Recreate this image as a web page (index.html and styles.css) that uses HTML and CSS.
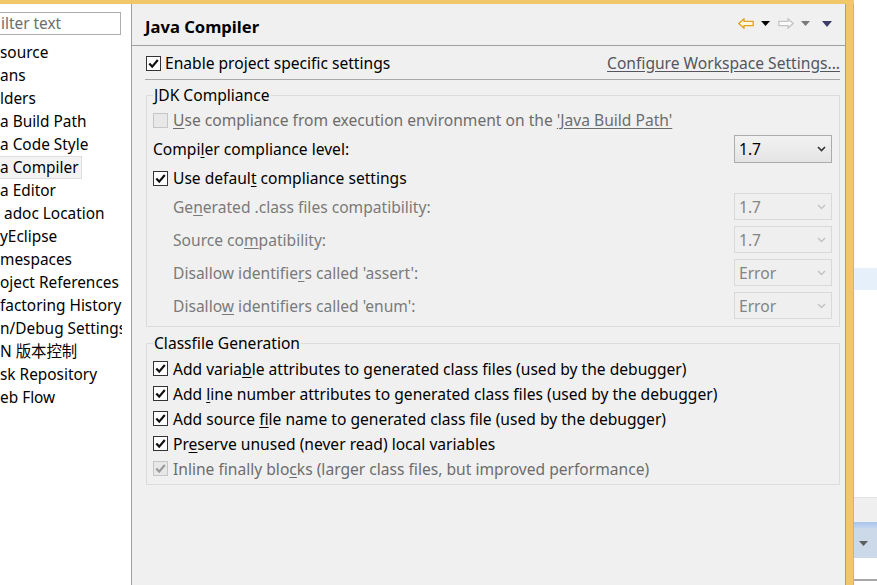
FILE: index.html
```html
<!DOCTYPE html>
<html>
<head>
<meta charset="utf-8">
<title>Properties - Java Compiler</title>
<link rel="stylesheet" href="styles.css">
</head>
<body>
<div class="screen">
  <div class="window">
    <div class="win-top"></div>
    <div class="win-body">
      <aside class="sidebar">
        <div class="filter">ilter text</div>
        <ul class="tree">
          <li>source</li>
          <li>ans</li>
          <li>lders</li>
          <li>a Build Path</li>
          <li>a Code Style</li>
          <li class="selected"><span>a Compiler</span></li>
          <li>a Editor</li>
          <li class="ind4">adoc Location</li>
          <li>yEclipse</li>
          <li>mespaces</li>
          <li>oject References</li>
          <li>factoring History</li>
          <li>n/Debug Settings</li>
          <li>N 版本控制</li>
          <li>sk Repository</li>
          <li>eb Flow</li>
        </ul>
      </aside>

      <main class="panel">
        <header class="panel-head">
          <h1 class="title">Java Compiler</h1>
          <div class="nav">
            <svg class="nav-arrow" width="16" height="11" viewBox="0 0 16 11"><polygon points="0.8,5.5 6,0.8 6,3.3 15.2,3.3 15.2,7.7 6,7.7 6,10.2" fill="#fff8e0" stroke="#e3a21a" stroke-width="1.3" stroke-linejoin="miter"/></svg>
            <svg class="nav-tri" width="9" height="5" viewBox="0 0 9 5"><polygon points="0,0 9,0 4.5,5" fill="#000"/></svg>
            <svg class="nav-arrow" width="16" height="11" viewBox="0 0 16 11"><polygon points="15.2,5.5 10,0.8 10,3.3 0.8,3.3 0.8,7.7 10,7.7 10,10.2" fill="#fafafa" stroke="#c4c4c4" stroke-width="1.3"/></svg>
            <svg class="nav-tri" width="9" height="5" viewBox="0 0 9 5"><polygon points="0,0 9,0 4.5,5" fill="#7a7a7a"/></svg>
            <svg class="nav-tri menu" width="10" height="6" viewBox="0 0 10 6"><polygon points="0,0 10,0 5,6" fill="#3c3c64"/></svg>
          </div>
        </header>

        <div class="panel-body">
          <div class="top-row">
            <label class="cb first">
              <span class="box"><svg width="13" height="13" viewBox="0 0 13 13"><path d="M2.3 6.6 L5.2 9.6 L10.8 3" fill="none" stroke="#111" stroke-width="2.2"/></svg></span>
              <span>Enable pro<u>j</u>ect specific settings</span>
            </label>
            <a class="link" href="#">Configure Workspace Settings...</a>
          </div>
          <div class="sep"></div>

          <fieldset class="group jdk">
            <legend>JDK Compliance</legend>
            <div class="row r24">
              <label class="cb disabled">
                <span class="box"></span>
                <span><u>U</u>se compliance from execution environment on the <a class="link dim" href="#">'Java Build Path'</a></span>
              </label>
            </div>
            <div class="row r28 gap3">
              <span class="lbl">Compi<u>l</u>er compliance level:</span>
              <div class="combo"><span>1.7</span><svg width="9" height="6" viewBox="0 0 9 6"><path d="M1 1 L4.5 4.5 L8 1" fill="none" stroke="#333" stroke-width="1.6"/></svg></div>
            </div>
            <div class="row r24 gap3">
              <label class="cb">
                <span class="box"><svg width="13" height="13" viewBox="0 0 13 13"><path d="M2.3 6.6 L5.2 9.6 L10.8 3" fill="none" stroke="#111" stroke-width="2.2"/></svg></span>
                <span>Use defaul<u>t</u> compliance settings</span>
              </label>
            </div>
            <div class="row r27 gap3">
              <span class="lbl sub">Ge<u>n</u>erated .class files compatibility:</span>
              <div class="combo off"><span>1.7</span><svg width="9" height="6" viewBox="0 0 9 6"><path d="M1 1 L4.5 4.5 L8 1" fill="none" stroke="#c2c2c2" stroke-width="1.4"/></svg></div>
            </div>
            <div class="row r27 gap6">
              <span class="lbl sub">Source co<u>m</u>patibility:</span>
              <div class="combo off"><span>1.7</span><svg width="9" height="6" viewBox="0 0 9 6"><path d="M1 1 L4.5 4.5 L8 1" fill="none" stroke="#c2c2c2" stroke-width="1.4"/></svg></div>
            </div>
            <div class="row r27 gap6">
              <span class="lbl sub">Disallow identifie<u>r</u>s called 'assert':</span>
              <div class="combo off"><span>Error</span><svg width="9" height="6" viewBox="0 0 9 6"><path d="M1 1 L4.5 4.5 L8 1" fill="none" stroke="#c2c2c2" stroke-width="1.4"/></svg></div>
            </div>
            <div class="row r27 gap6">
              <span class="lbl sub">Disallo<u>w</u> identifiers called 'enum':</span>
              <div class="combo off"><span>Error</span><svg width="9" height="6" viewBox="0 0 9 6"><path d="M1 1 L4.5 4.5 L8 1" fill="none" stroke="#c2c2c2" stroke-width="1.4"/></svg></div>
            </div>
          </fieldset>

          <fieldset class="group classfile">
            <legend>Classfile Generation</legend>
            <div class="row r25">
              <label class="cb"><span class="box"><svg width="13" height="13" viewBox="0 0 13 13"><path d="M2.3 6.6 L5.2 9.6 L10.8 3" fill="none" stroke="#111" stroke-width="2.2"/></svg></span><span>Add varia<u>b</u>le attributes to generated class files (used by the debugger)</span></label>
            </div>
            <div class="row r25">
              <label class="cb"><span class="box"><svg width="13" height="13" viewBox="0 0 13 13"><path d="M2.3 6.6 L5.2 9.6 L10.8 3" fill="none" stroke="#111" stroke-width="2.2"/></svg></span><span>Add <u>l</u>ine number attributes to generated class files (used by the debugger)</span></label>
            </div>
            <div class="row r25">
              <label class="cb"><span class="box"><svg width="13" height="13" viewBox="0 0 13 13"><path d="M2.3 6.6 L5.2 9.6 L10.8 3" fill="none" stroke="#111" stroke-width="2.2"/></svg></span><span>Add source <u>f</u>ile name to generated class file (used by the debugger)</span></label>
            </div>
            <div class="row r25">
              <label class="cb"><span class="box"><svg width="13" height="13" viewBox="0 0 13 13"><path d="M2.3 6.6 L5.2 9.6 L10.8 3" fill="none" stroke="#111" stroke-width="2.2"/></svg></span><span>Pr<u>e</u>serve unused (never read) local variables</span></label>
            </div>
            <div class="row r25">
              <label class="cb disabled"><span class="box"><svg width="13" height="13" viewBox="0 0 13 13"><path d="M2.3 6.6 L5.2 9.6 L10.8 3" fill="none" stroke="#9a9a9a" stroke-width="2.2"/></svg></span><span>Inline finally blo<u>c</u>ks (larger class files, but improved performance)</span></label>
            </div>
          </fieldset>
        </div>
      </main>

      <div class="win-edge"></div>
    </div>
  </div>

  <div class="behind">
    <div class="hl"></div>
    <div class="dock">
      <div class="dock-top"></div>
      <div class="dock-bar"></div>
      <div class="dock-row"><svg width="9" height="5" viewBox="0 0 9 5"><polygon points="0,0 9,0 4.5,5" fill="#5e5e5e"/></svg></div>
      <div class="dock-line"></div>
    </div>
  </div>
</div>
</body>
</html>
```

FILE: styles.css
```css
* { box-sizing: border-box; }
html, body { margin: 0; padding: 0; }
body {
  width: 877px;
  height: 585px;
  overflow: hidden;
  background: #fff;
  font-family: "Noto Sans", "Noto Sans CJK SC", sans-serif;
  font-size: 15.6px;
  color: #000;
}
u { text-decoration: underline; text-underline-offset: 2px; }

.screen { display: flex; height: 585px; }

.window { width: 854px; flex: none; display: flex; flex-direction: column; }
.win-top { height: 4px; background: #f0c86a; flex: none; }
.win-body { flex: 1; display: flex; min-height: 0; }
.win-edge {
  width: 8px;
  flex: none;
  background: #f0c86a;
  border-right: 1px solid #d9b25c;
}

/* sidebar */
.sidebar {
  width: 132px;
  flex: none;
  background: #fff;
  border-right: 1px solid #a0a0a0;
  overflow: hidden;
  font-size: 15.4px;
}
.filter {
  margin: 8px 0 0 -10px;
  width: 131px;
  height: 23px;
  border: 1px solid #adadad;
  padding-left: 10px;
  line-height: 21px;
  color: #6d6d6d;
  white-space: nowrap;
}
.tree {
  list-style: none;
  margin: 6px 0 0 0;
  padding: 0;
  width: 122px;
  overflow: hidden;
}
.tree li {
  height: 23px;
  line-height: 23px;
  white-space: nowrap;
}
.tree li.ind4 { padding-left: 4px; }
.tree li.selected span {
  display: inline-block;
  height: 23px;
  line-height: 21px;
  padding-right: 2px;
  background: #f3f3f3;
  border: 1px solid #dedede;
  border-left: none;
}

/* panel */
.panel {
  width: 714px;
  flex: none;
  background: #f0f0f0;
  border-right: 1px solid #a0a0a0;
  display: flex;
  flex-direction: column;
}
.panel-head {
  height: 42px;
  flex: none;
  border-bottom: 1px solid #a0a0a0;
  display: flex;
  align-items: flex-start;
  padding: 0 0 0 13px;
}
.title {
  margin: 12px 0 0 0;
  font-size: 16.6px;
  font-weight: bold;
  line-height: 22px;
}
.nav {
  margin-left: auto;
  margin-top: 14px;
  display: flex;
  align-items: center;
  height: 11px;
  padding-right: 13px;
}
.nav svg { display: block; }
.nav-arrow { margin-left: 8px; }
.nav-arrow:first-child { margin-left: 0; }
.nav-tri { margin-left: 7px; }
.nav-tri.menu { margin-left: 12px; }

.panel-body {
  padding: 0 5px 0 14px;
}
.top-row {
  margin-top: 5px;
  height: 24px;
  display: flex;
  align-items: center;
  justify-content: space-between;
}
.link {
  color: #55555f;
  text-decoration: underline;
  text-underline-offset: 2px;
}
.link.dim { color: #6d6d6d; }
.sep {
  margin: 4px 0 0 -1px;
  height: 1px;
  background: #a8a8a8;
}

/* checkbox */
.cb { display: flex; align-items: center; white-space: nowrap; }
.box {
  width: 15px;
  height: 15px;
  flex: none;
  border: 1px solid #333;
  background: #fff;
  margin-right: 5px;
  display: flex;
  align-items: center;
  justify-content: center;
}
.box svg { display: block; }
.cb.first .box { margin-right: 4px; }
.cb.disabled { color: #6d6d6d; }
.cb.disabled .box { border-color: #c6c6c6; background: #e8e8e8; }

/* groups */
.group {
  margin: 5px 0 0 0;
  padding: 3px 7px 7px 6px;
  border: 1px solid #dcdcdc;
  min-width: 0;
}
.group legend {
  padding: 0 1px;
  margin-left: 0;
  line-height: 20px;
}
.group.classfile { margin-top: 6px; padding-bottom: 3px; }

.row { display: flex; align-items: center; }
.r24 { height: 24px; }
.r25 { height: 25px; }
.r27 { height: 27px; }
.r28 { height: 28px; }
.gap3 { margin-top: 3px; }
.gap6 { margin-top: 6px; }
.lbl { white-space: nowrap; }
.lbl.sub { padding-left: 20px; color: #7a7a7a; }

.combo {
  margin-left: auto;
  width: 98px;
  height: 100%;
  border: 1px solid #acacac;
  background: linear-gradient(#f2f2f2, #e4e4e4);
  display: flex;
  align-items: center;
  justify-content: space-between;
  padding: 0 5px 0 4px;
}
.combo svg { display: block; }
.combo.off {
  border-color: #d9d9d9;
  background: #efefef;
  color: #848484;
}

/* background windows on the right */
.behind {
  flex: 1;
  display: flex;
  flex-direction: column;
  background: #fff;
}
.hl {
  margin-top: 268px;
  height: 22px;
  background: #e5f0fb;
}
.dock { margin-top: 207px; }
.dock-top {
  height: 25px;
  background: #efefef;
  border-top: 1px solid #e2e2e2;
}
.dock-bar {
  height: 6px;
  background: linear-gradient(#a9c5ea, #c3d6ef);
}
.dock-row {
  height: 30px;
  background: #ccd9e8;
  display: flex;
  align-items: center;
  padding-left: 5px;
}
.dock-row svg { display: block; }
.dock-line {
  margin-top: 21px;
  height: 2px;
  background: #a8a8a8;
}
```
